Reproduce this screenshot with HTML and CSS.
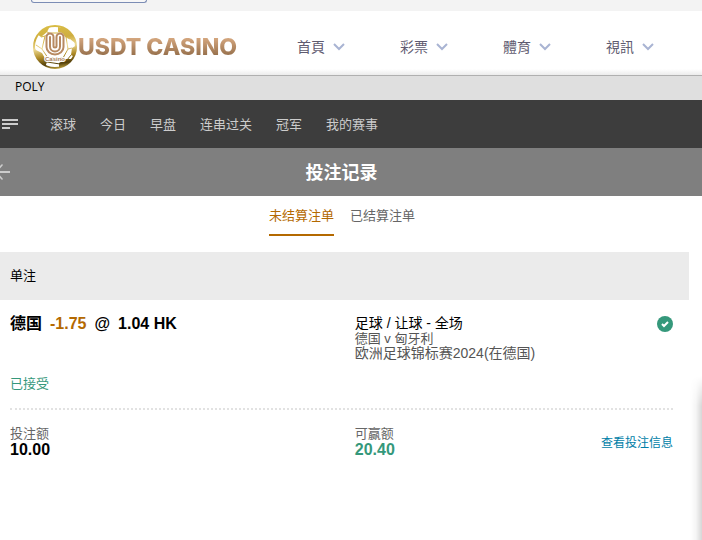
FILE: index.html
```html
<!DOCTYPE html>
<html lang="zh-CN">
<head>
  <meta charset="UTF-8" />
  <meta name="viewport" content="width=device-width, initial-scale=1.0"/>
  <title>投注记录</title>
  <link rel="stylesheet" href="styles.css">
</head>
<body>
  <div class="topbar">
    <button class="topbar-btn" type="button" aria-label="menu"></button>
  </div>

  <header class="header">
    <a class="logo" href="#">
      <svg class="logo-ball" viewBox="0 0 44 44" aria-hidden="true">
        <defs>
          <linearGradient id="gold" gradientUnits="userSpaceOnUse" x1="18" y1="0" x2="24" y2="44">
            <stop offset="0" stop-color="#d9bd45"/>
            <stop offset="0.3" stop-color="#cfae40"/>
            <stop offset="0.5" stop-color="#ecd992"/>
            <stop offset="0.7" stop-color="#b08c28"/>
            <stop offset="0.88" stop-color="#54400b"/>
            <stop offset="1" stop-color="#c2a540"/>
          </linearGradient>
          <clipPath id="ball"><circle cx="22" cy="22" r="21"/></clipPath>
        </defs>
        <circle cx="22" cy="22" r="21" fill="#fff"/>
        <g clip-path="url(#ball)" fill="url(#gold)">
          <path d="M25 2 L36 4 L44 14 L42 18 L37 14 L31 11 L25 6 Z"/>
          <path d="M4 9 L11 3 L16 3 L14 7 L8 12 Z"/>
          <path d="M0 21 L3 25 L9 28 L14 37 L12 42 L3 36 Z"/>
          <path d="M44 20 L39 23 L38 30 L42 32 Z"/>
          <path d="M26 38 L33 34 L39 34 L30 44 H26 Z"/>
        </g>
        <g fill="none" stroke="url(#gold)">
          <circle cx="22" cy="22" r="21" stroke-width="2"/>
          <path d="M12 11 L17 8 H28 L33 12 L35 24 L30 33 H15 L9 24 Z"/>
          <path d="M14 7 L17 8 M25 6 L28 8 M33 12 L37 14 M35 24 L39 23 M8 12 L12 11 M3 20 L9 24 M30 33 L33 35 M38 30 L34 35 M14 37 L27 39"/>
        </g>
        <path d="M14 12 V22 a8 7 0 0 0 16 0 V12 a3 3 0 0 0 -6 0 V21 a2 2 0 0 1 -4 0 V12 a3 3 0 0 0 -6 0" fill="#fff" stroke="#fff" stroke-width="3"/>
        <g fill="none" stroke="#b78961" stroke-linecap="round">
          <path d="M13.500 12 V22 a8.500 7.500 0 0 0 17 0 V12 a3.500 3.500 0 0 0 -7 0 V21 a1.500 1.500 0 0 1 -3 0 V12 a3.500 3.500 0 0 0 -7 0" stroke-width="2"/>
          <path d="M17 12 V21.500 a5 5 0 0 0 10 0 V12" stroke-width="2"/>
        </g>
        <text class="logo-tag" x="22" y="36" text-anchor="middle">Casino</text>
      </svg>
      <span class="logo-name">USDT CASINO</span>
    </a>
    <nav class="main-nav" lang="zh-TW">
      <a href="#">首頁 <svg viewBox="0 0 12 8"><path d="M1 1 L6 6 L11 1"/></svg></a>
      <a href="#">彩票 <svg viewBox="0 0 12 8"><path d="M1 1 L6 6 L11 1"/></svg></a>
      <a href="#">體育 <svg viewBox="0 0 12 8"><path d="M1 1 L6 6 L11 1"/></svg></a>
      <a href="#">視訊 <svg viewBox="0 0 12 8"><path d="M1 1 L6 6 L11 1"/></svg></a>
    </nav>
  </header>

  <div class="provider">POLY</div>

  <nav class="sport-nav">
    <button class="icon-btn" type="button" aria-label="菜单">
      <svg width="16" height="10" viewBox="0 0 16 10"><path d="M0 0h16v2H0z M0 4h16v2H0z M0 8h8v2H0z"/></svg>
    </button>
    <a href="#">滚球</a>
    <a href="#">今日</a>
    <a href="#">早盘</a>
    <a href="#">连串过关</a>
    <a href="#">冠军</a>
    <a href="#">我的赛事</a>
  </nav>

  <div class="title-bar">
    <button class="icon-btn" type="button" aria-label="返回">
      <svg width="10" height="16" viewBox="6 0 10 16"><path d="M16 7v2H4l5 6-1 1-8-8 8-8 1 1-5 6z"/></svg>
    </button>
    <h1>投注记录</h1>
  </div>

  <main class="content">
    <div class="tabs">
      <a class="tab active" href="#">未结算注单</a>
      <a class="tab" href="#">已结算注单</a>
    </div>

    <h2 class="bet-type">单注</h2>

    <div class="bet">
      <div class="bet-row">
        <div class="pick">
          <span>德国</span>
          <span class="handicap">-1.75</span>
          <span>@</span>
          <span>1.04 HK</span>
        </div>
        <div class="match">
          <div class="market">足球 / 让球 - 全场</div>
          <div class="teams">德国 v 匈牙利</div>
          <div class="league">欧洲足球锦标赛2024(在德国)</div>
        </div>
        <svg class="check" viewBox="0 0 16 16"><circle cx="8" cy="8" r="8"/><path d="M5 8 L7 10 L11 6"/></svg>
      </div>
      <div class="status">已接受</div>
      <div class="bet-row stake-row">
        <div>
          <div class="label">投注额</div>
          <div class="amount">10.00</div>
        </div>
        <div>
          <div class="label">可赢额</div>
          <div class="amount win">20.40</div>
        </div>
        <a class="info-link" href="#">查看投注信息</a>
      </div>
    </div>
  </main>

  <div class="side-shadow"></div>
</body>
</html>
```
FILE: styles.css
```css
* {
  box-sizing: border-box;
}

body {
  margin: 0;
  position: relative;
  min-height: 100vh;
  background: #fff;
  color: #000;
  font-family: "Liberation Sans", "Noto Sans CJK SC", sans-serif;
  font-size: 13px;
}

a {
  color: inherit;
  text-decoration: none;
}

button {
  border: none;
  padding: 0;
  background: none;
  cursor: pointer;
}

/* top */
.topbar {
  height: 11px;
  padding-left: 31px;
  background: #f3f3f3;
}

.topbar-btn {
  display: block;
  width: 116px;
  height: 3px;
  border: 1px solid #7c8db5;
  border-top: none;
  border-radius: 0 0 6px 6px;
  background: #f7f7f7;
}

.header {
  height: 64px;
  padding-left: 33px;
  display: flex;
  align-items: center;
  background: linear-gradient(#fff 58px, #ececec);
}

.logo {
  display: flex;
  align-items: center;
  gap: 1px;
  flex: none;
  width: 264px;
  padding-top: 8px;
}

.logo-ball {
  width: 44px;
  height: 44px;
}

.logo-tag {
  font: bold 6px "Liberation Sans", sans-serif;
  fill: #a87d58;
  stroke: #fff;
  stroke-width: 2px;
  paint-order: stroke;
}

.logo-name {
  font-family: Inter, "Liberation Sans", sans-serif;
  font-size: 23px;
  line-height: 28px;
  font-weight: 800;
  white-space: nowrap;
  background: linear-gradient(#d3a57d 20%, #926c48 85%);
  -webkit-background-clip: text;
  background-clip: text;
  color: transparent;
}

.main-nav {
  display: flex;
  gap: 55px;
  padding-top: 6px;
  font-family: "Noto Sans CJK TC", sans-serif;
  font-size: 14px;
  line-height: 20px;
  color: #5f5b70;
}

.main-nav a {
  display: flex;
  align-items: center;
  gap: 8px;
  white-space: nowrap;
}

.main-nav svg {
  width: 12px;
  height: 8px;
  margin-top: 2px;
  fill: none;
  stroke: #a9b4d3;
  stroke-width: 2;
}

.provider {
  height: 25px;
  padding-left: 15px;
  border-top: 1px solid #b0b0b0;
  background: #dfdfdf;
  font-family: "Open Sans", sans-serif;
  font-size: 12px;
  line-height: 22px;
}

/* sports menu */
.sport-nav {
  height: 48px;
  padding-left: 2px;
  display: flex;
  align-items: center;
  gap: 24px;
  background: #3d3d3d;
  color: #ccc;
  white-space: nowrap;
}

.sport-nav a {
  padding-bottom: 2px;
}

.icon-btn {
  display: flex;
}

.icon-btn svg {
  fill: #ccc;
}

.sport-nav .icon-btn {
  margin-right: 8px;
}

.title-bar {
  height: 48px;
  padding-right: 13px;
  display: grid;
  grid-template-columns: 10px 1fr 16px;
  align-items: center;
  background: #7f7f7f;
}

.title-bar h1 {
  margin: 0;
  padding-bottom: 2px;
  font-size: 18px;
  text-align: center;
  color: #fff;
}

/* bets */
.content {
  margin-right: 13px;
}

.tabs {
  display: flex;
  justify-content: center;
  gap: 16px;
  padding: 0 5px 16px 0;
  color: #666;
}

.tab {
  height: 40px;
  line-height: 40px;
}

.tab.active {
  color: #b46900;
  border-bottom: 2px solid #b46900;
}

.bet-type {
  margin: 0;
  padding-left: 10px;
  font-size: 13px;
  font-weight: normal;
  line-height: 48px;
  background: #ebebeb;
}

.bet {
  padding: 16px 16px 16px 10px;
}

.bet-row {
  display: grid;
  grid-template-columns: 52% 1fr auto;
}

.pick {
  display: flex;
  gap: 8px;
  font-size: 16px;
  line-height: 15px;
  font-weight: bold;
}

.handicap {
  color: #b46900;
}

.match {
  line-height: 15px;
  color: #555;
}

.market,
.league {
  font-size: 14px;
}

.market {
  color: #000;
}

.check {
  width: 16px;
  height: 16px;
  fill: #35987b;
}

.check path {
  fill: none;
  stroke: #fff;
  stroke-width: 2;
}

.status {
  padding: 15px 0 16px;
  line-height: 16px;
  color: #35987b;
}

.stake-row {
  padding-top: 16px;
  border-top: 2px dotted #e2e2e2;
  align-items: center;
}

.label {
  line-height: 16px;
  color: #666;
}

.amount {
  font-size: 16px;
  line-height: 16px;
  font-weight: bold;
}

.win {
  color: #35987b;
}

.info-link {
  padding-bottom: 2px;
  font-size: 12px;
  color: #007ea7;
}

/* soft edge on the right side of the page */
.side-shadow {
  position: absolute;
  top: 376px;
  right: 0;
  bottom: 0;
  width: 12px;
  background: linear-gradient(to right, rgba(0, 0, 0, 0), rgba(0, 0, 0, 0.04) 50%, rgba(0, 0, 0, 0.16));
  -webkit-mask-image: linear-gradient(transparent, #000 30px);
  mask-image: linear-gradient(transparent, #000 30px);
}
```
